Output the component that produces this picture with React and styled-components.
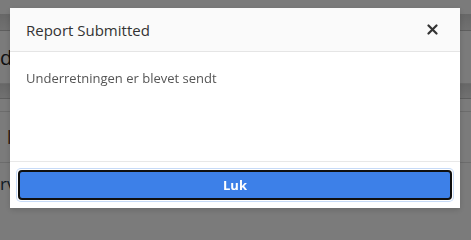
import React from "react";
import styled, { createGlobalStyle } from "styled-components";

const Global = createGlobalStyle`
  html, body {
    margin: 0;
    padding: 0;
    width: 471px;
    height: 224px;
    overflow: hidden;
    background: #f6f6f6;
    font-family: "Open Sans", "Noto Sans", Arial, sans-serif;
  }
`;

// page behind the dialog
const Page = styled.div`
  height: 224px;
  display: flex;
  flex-direction: column;
`;

const TopBar = styled.div`
  height: 14px;
  background: #f6f6f6;
`;

const Band = styled.div`
  height: ${(p) => p.h}px;
  background: linear-gradient(#cfcfcf, #e2e2e2);
  border-bottom: 1px solid #bdbdbd;
`;

const Row = styled.div`
  height: ${(p) => p.h}px;
  display: flex;
  align-items: center;
  padding-left: ${(p) => p.indent || 0}px;
  border-bottom: ${(p) => (p.line ? "1px solid #d8d8d8" : "none")};
`;

const Word = styled.span`
  white-space: nowrap;
  font-size: ${(p) => p.size}px;
  color: ${(p) => p.color};
`;

const Overlay = styled.div`
  position: fixed;
  inset: 0;
  background: rgba(0, 0, 0, 0.5);
  display: flex;
  align-items: flex-start;
  padding: 8px 0 0 10px;
`;

const Dialog = styled.div`
  width: 450px;
  height: 200px;
  background: #fff;
  display: flex;
  flex-direction: column;
  box-shadow: 0 2px 6px rgba(0, 0, 0, 0.15);
`;

const Header = styled.div`
  height: 44px;
  box-sizing: border-box;
  background: #fafafa;
  border-bottom: 1px solid #e5e5e5;
  display: flex;
  align-items: center;
  justify-content: space-between;
  padding: 0 20px 0 16px;
`;

const Title = styled.h2`
  margin: 0;
  font-size: 15px;
  font-weight: 400;
  color: #333;
`;

const Close = styled.button`
  border: none;
  background: none;
  padding: 0;
  width: 16px;
  height: 16px;
  display: flex;
  align-items: center;
  justify-content: center;
  cursor: pointer;
`;

const Body = styled.div`
  flex: 1;
  padding: 16px;
  font-size: 13px;
  line-height: 20px;
  color: #555;
`;

const Footer = styled.div`
  border-top: 1px solid #e8e8e8;
  padding: 8px;
`;

const Button = styled.button`
  width: 100%;
  height: 30px;
  box-sizing: border-box;
  background: #3d80e8;
  border: 1px solid #111;
  border-radius: 3px;
  box-shadow: 0 0 0 2px #c7dbf8;
  color: #fff;
  font-family: inherit;
  font-size: 13px;
  font-weight: 700;
  cursor: pointer;
`;

export default function App() {
  return (
    <>
      <Global />
      <Page>
        <TopBar />
        <Band h={16} />
        <Row h={52} line>
          <Word size={20} color="#222">d</Word>
        </Row>
        <Band h={14} />
        <Row h={12} line />
        <Row h={50} line indent={7}>
          <Word size={18} color="#5a3a1a">l</Word>
        </Row>
        <Row h={40}>
          <Word size={17} color="#234">rv</Word>
        </Row>
      </Page>
      <Overlay>
        <Dialog role="dialog">
          <Header>
            <Title>Report Submitted</Title>
            <Close aria-label="Close">
              <svg width="11" height="11" viewBox="0 0 11 11">
                <path
                  d="M1.5 1.5 L9.5 9.5 M9.5 1.5 L1.5 9.5"
                  stroke="#333"
                  strokeWidth="2.2"
                  strokeLinecap="round"
                />
              </svg>
            </Close>
          </Header>
          <Body>Underretningen er blevet sendt</Body>
          <Footer>
            <Button autoFocus>Luk</Button>
          </Footer>
        </Dialog>
      </Overlay>
    </>
  );
}
